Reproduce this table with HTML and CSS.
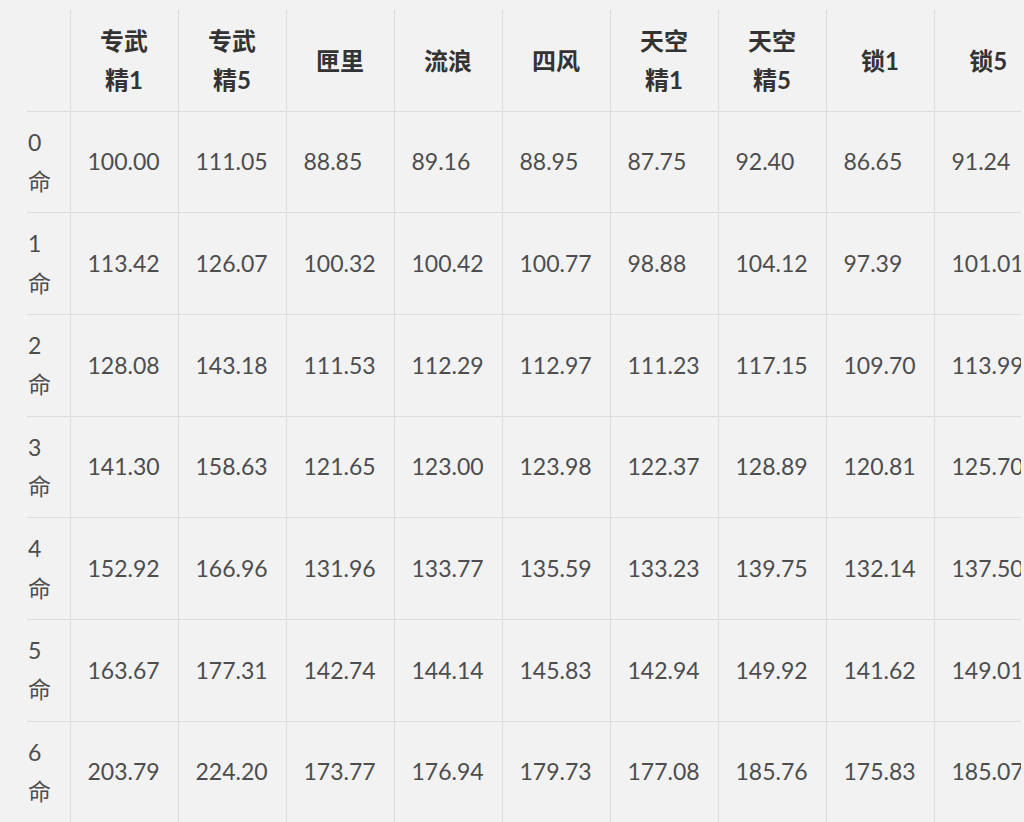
FILE: index.html
```html
<!DOCTYPE html>
<html lang="zh-CN">
<head>
<meta charset="utf-8">
<title>表</title>
<link rel="stylesheet" href="styles.css">
</head>
<body>
<div class="wrap">
<table class="tbl">
<thead>
<tr>
<th class="lead"></th>
<th>专武<br>精1</th>
<th>专武<br>精5</th>
<th>匣里</th>
<th>流浪</th>
<th>四风</th>
<th>天空<br>精1</th>
<th>天空<br>精5</th>
<th>锁1</th>
<th>锁5</th>
</tr>
</thead>
<tbody>
<tr><td class="lead">0<br>命</td><td>100.00</td><td>111.05</td><td>88.85</td><td>89.16</td><td>88.95</td><td>87.75</td><td>92.40</td><td>86.65</td><td>91.24</td></tr>
<tr><td class="lead">1<br>命</td><td>113.42</td><td>126.07</td><td>100.32</td><td>100.42</td><td>100.77</td><td>98.88</td><td>104.12</td><td>97.39</td><td>101.01</td></tr>
<tr><td class="lead">2<br>命</td><td>128.08</td><td>143.18</td><td>111.53</td><td>112.29</td><td>112.97</td><td>111.23</td><td>117.15</td><td>109.70</td><td>113.99</td></tr>
<tr><td class="lead">3<br>命</td><td>141.30</td><td>158.63</td><td>121.65</td><td>123.00</td><td>123.98</td><td>122.37</td><td>128.89</td><td>120.81</td><td>125.70</td></tr>
<tr><td class="lead">4<br>命</td><td>152.92</td><td>166.96</td><td>131.96</td><td>133.77</td><td>135.59</td><td>133.23</td><td>139.75</td><td>132.14</td><td>137.50</td></tr>
<tr><td class="lead">5<br>命</td><td>163.67</td><td>177.31</td><td>142.74</td><td>144.14</td><td>145.83</td><td>142.94</td><td>149.92</td><td>141.62</td><td>149.01</td></tr>
<tr><td class="lead">6<br>命</td><td>203.79</td><td>224.20</td><td>173.77</td><td>176.94</td><td>179.73</td><td>177.08</td><td>185.76</td><td>175.83</td><td>185.07</td></tr>
</tbody>
</table>
</div>
</body>
</html>
```
FILE: styles.css
```css
html, body {
  margin: 0;
  padding: 0;
  background: #f2f2f2;
}
body {
  font-family: Lato, "Noto Sans CJK SC", sans-serif;
  color: #4d4d4d;
  height: 822px;
  overflow: hidden;
}
.wrap {
  margin: 10px 0 0 27px;
  width: 994px;
  overflow: hidden;
}
.tbl {
  border-collapse: collapse;
  table-layout: fixed;
  width: 1015px;
  font-size: 23px;
  line-height: 39.33px;
}
.tbl th,
.tbl td {
  width: 108px;
  box-sizing: border-box;
  padding: 11px 6px 11px 17px;
  border-left: 1px solid #dcdcdc;
  border-bottom: 1px solid #dcdcdc;
  vertical-align: middle;
  text-align: left;
  white-space: nowrap;
}
.tbl th {
  font-size: 24px;
  font-weight: 700;
  color: #333333;
  text-align: center;
  padding-left: 6px;
}
.tbl .lead {
  width: 43px;
  border-left: none;
  padding-left: 1px;
  padding-right: 0;
}
```
